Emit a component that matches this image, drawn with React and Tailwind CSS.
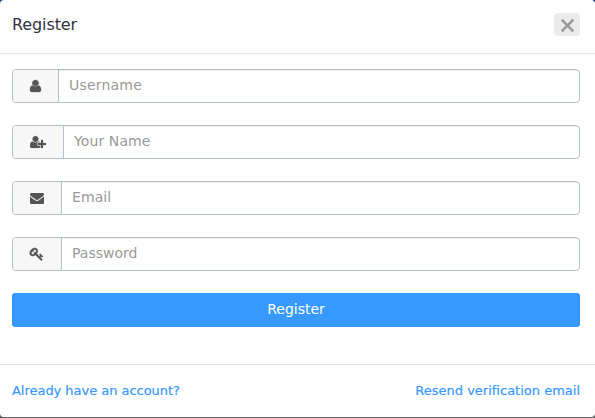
import React from "react";

const icons = {
  user: {
    className: "w-[11px]",
    viewBox: "256 0 1280 1792",
    strokeWidth: 40,
    d: "M1536 1399q0 109-62.5 187t-150.5 78h-854q-88 0-150.5-78t-62.5-187q0-85 8.5-160.5t31.5-152 58.5-131 94-89 134.5-34.5q131 128 313 128t313-128q76 0 134.5 34.5t94 89 58.5 131 31.5 152 8.5 160.5zm-256-887q0 159-112.5 271.5t-271.5 112.5-271.5-112.5-112.5-271.5 112.5-271.5 271.5-112.5 271.5 112.5 112.5 271.5z",
  },
  userPlus: {
    className: "w-4",
    viewBox: "0 0 2048 1792",
    strokeWidth: 20,
    d: "M704 896q-159 0-271.5-112.5t-112.5-271.5 112.5-271.5 271.5-112.5 271.5 112.5 112.5 271.5-112.5 271.5-271.5 112.5zm960 128h352q13 0 22.5 9.5t9.5 22.5v192q0 13-9.5 22.5t-22.5 9.5h-352v352q0 13-9.5 22.5t-22.5 9.5h-192q-13 0-22.5-9.5t-9.5-22.5v-352h-352q-13 0-22.5-9.5t-9.5-22.5v-192q0-13 9.5-22.5t22.5-9.5h352v-352q0-13 9.5-22.5t22.5-9.5h192q13 0 22.5 9.5t9.5 22.5v352zm-736 224q0 52 38 90t90 38h256v238q-68 50-171 50h-874q-121 0-194-69t-73-190q0-53 3.5-103.5t14-109 26.5-108.5 43-97.5 62-81 85.5-53.5 111.5-20q19 0 39 17 79 61 154.5 91.5t164.5 30.5 164.5-30.5 154.5-91.5q20-17 39-17 132 0 217 96h-223q-52 0-90 38t-38 90v192z",
  },
  envelope: {
    className: "w-3.5",
    viewBox: "0 0 1792 1792",
    strokeWidth: 0,
    d: "M1792 710v794q0 66-47 113t-113 47h-1472q-66 0-113-47t-47-113v-794q44 49 101 87 362 246 497 345 57 42 92.5 65.5t94.5 48 110 24.5h2q51 0 110-24.5t94.5-48 92.5-65.5q170-123 498-345 57-39 100-87zm0-294q0 79-49 151t-122 123q-376 261-468 325-10 7-42.5 31t-54 38.5-52 32.5-57.5 27-50 9h-2q-23 0-50-9t-57.5-27-52-32.5-54-38.5-42.5-31q-91-64-262-182.5t-205-142.5q-62-42-117-115.5t-55-136.5q0-78 41.5-130t118.5-52h1472q65 0 112.5 47t47.5 113z",
  },
  key: {
    className: "w-3.5",
    viewBox: "32 0 1792 1792",
    strokeWidth: 60,
    d: "M832 512q0-80-56-136t-136-56-136 56-56 136q0 42 19 83-41-19-83-19-80 0-136 56t-56 136 56 136 136 56 136-56 56-136q0-42-19-83 41 19 83 19 80 0 136-56t56-136zm851 704q0 17-49 66t-66 49q-9 0-28.5-16t-36.5-33-38.5-40-24.5-26l-96 96 220 220q28 28 28 68 0 42-39 81t-81 39q-40 0-68-28l-671-671q-176 131-365 131-163 0-265.5-102.5t-102.5-265.5q0-160 95-313t248-248 313-95q163 0 265.5 102.5t102.5 265.5q0 189-131 365l355 355 96-96q-3-3-26-24.5t-40-38.5-33-36.5-16-28.5q0-17 49-66t66-49q13 0 23 10 6 6 46 44.5t82 79.5 86.5 86 73 78 28.5 41z",
  },
};

function Field({ icon, label, type = "text", tracking = "" }) {
  const { className, viewBox, strokeWidth, d } = icons[icon];
  return (
    <div className="flex h-[34px] overflow-hidden rounded-[4px] border border-[#b7bfc6] bg-white">
      <span className="flex shrink-0 items-center bg-[#f7f7f7] px-[17px] pb-px">
        <svg
          className={`h-3.5 overflow-visible ${className}`}
          viewBox={viewBox}
          preserveAspectRatio="none"
          fill="#555555"
          stroke="#555555"
          strokeWidth={strokeWidth}
          aria-hidden="true"
        >
          <path d={d} />
        </svg>
      </span>
      <input
        type={type}
        placeholder={label}
        aria-label={label}
        className={`min-w-0 flex-1 border-l border-[#b7bfc6] px-2.5 pb-0.5 text-sm shadow-[inset_0_1px_1px_rgba(0,0,0,0.075)] outline-none placeholder:text-[#999999] ${tracking}`}
      />
    </div>
  );
}

export default function App() {
  return (
    <div className="h-[418px] w-[595px] overflow-hidden bg-[linear-gradient(#123a6b_50%,#666666_50%)] font-['DejaVu_Sans',sans-serif]">
      <div className="flex h-[417px] flex-col rounded-[4px] bg-white">
        <header className="flex h-[54px] shrink-0 items-center justify-between border-b border-[#e5e5e5] pr-[15px] pl-3">
          <h1 className="pb-1 text-[16px] leading-6 tracking-[-0.1px] text-[#333340]">Register</h1>
          <button aria-label="Close" className="mb-1 flex h-[23px] w-[26px] items-center justify-center rounded-[4px] bg-[#ebebeb]">
            <svg className="mt-px ml-px h-[13px] w-[13px]" viewBox="0 0 13 13" fill="none" stroke="#999999" strokeWidth="2.6" aria-hidden="true">
              <path d="M.7.7l11.6 11.6M12.3.7.7 12.3" />
            </svg>
          </button>
        </header>
        <form className="flex flex-1 flex-col gap-[22px] pt-[15px] pr-[15px] pl-3">
          <Field icon="user" label="Username" tracking="tracking-[0.2px]" />
          <Field icon="userPlus" label="Your Name" tracking="tracking-[0.1px]" />
          <Field icon="envelope" label="Email" type="email" tracking="tracking-[0.1px]" />
          <Field icon="key" label="Password" type="password" />
          <button type="button" className="h-[34px] rounded-[3px] bg-[#3899ff] pb-0.5 text-sm text-white">
            Register
          </button>
        </form>
        <footer className="flex h-[53px] shrink-0 items-center justify-between border-t border-[#e5e5e5] pr-[15px] pl-3 text-[13px] text-[#3899ff] [-webkit-text-stroke:0.2px_#3899ff]">
          <a href="#login" className="tracking-[-0.03px]">Already have an account?</a>
          <a href="#resend">Resend verification email</a>
        </footer>
      </div>
    </div>
  );
}
